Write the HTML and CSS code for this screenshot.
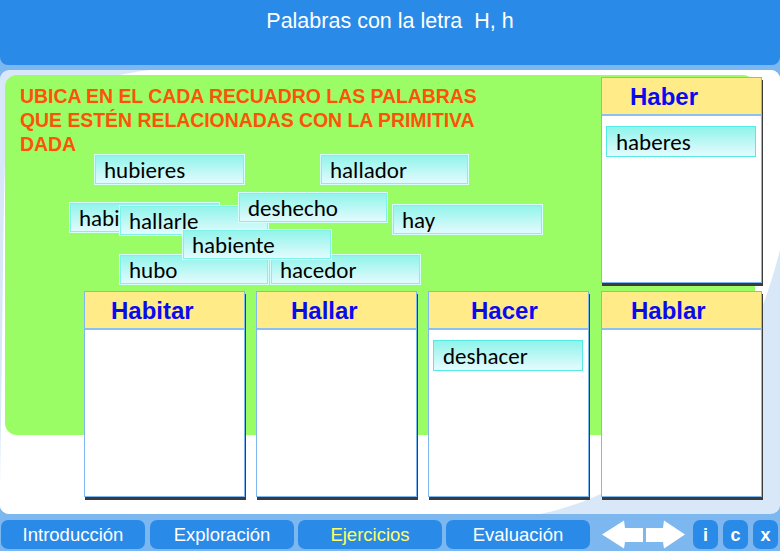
FILE: index.html
```html
<!DOCTYPE html>
<html lang="es">
<head>
<meta charset="utf-8">
<title>Palabras con la letra H, h</title>
<link rel="stylesheet" href="styles.css">
</head>
<body>
<div class="app">
  <header class="topbar">
    <h1 class="title">Palabras con la letra&nbsp; H, h</h1>
  </header>

  <main class="panel">
    <svg class="panel-bg" width="780" height="444" viewBox="0 0 780 444" aria-hidden="true">
      <path d="M150 0 L780 0 L780 180 C745 320 660 420 540 444 L0 444 L0 420 C2 300 3 160 5 90 C20 40 80 8 150 0 Z" fill="#ffffff"/>
    </svg>
    <div class="stage">
      <section class="field">
        <p class="instructions">UBICA EN EL CADA RECUADRO LAS PALABRAS<br>QUE ESTÉN RELACIONADAS CON LA PRIMITIVA<br>DADA</p>
        <div class="tile" style="left:89px;top:79px;width:151px">hubieres</div>
        <div class="tile" style="left:315px;top:79px;width:149px">hallador</div>
        <div class="tile" style="left:64px;top:127px;width:151px">habi</div>
        <div class="tile" style="left:114px;top:130px">hallarle</div>
        <div class="tile" style="left:233px;top:117px">deshecho</div>
        <div class="tile" style="left:387px;top:129px;width:151px">hay</div>
        <div class="tile" style="left:114px;top:179px">hubo</div>
        <div class="tile" style="left:265px;top:179px;width:151px">hacedor</div>
        <div class="tile" style="left:177px;top:154px">habiente</div>
      </section>

      <div class="box box-haber">
        <div class="box-head pad-29">Haber</div>
        <div class="box-body"><div class="tile tile-flow">haberes</div></div>
      </div>
      <div class="box box-habitar">
        <div class="box-head pad-27">Habitar</div>
        <div class="box-body"></div>
      </div>
      <div class="box box-hallar">
        <div class="box-head pad-35">Hallar</div>
        <div class="box-body"></div>
      </div>
      <div class="box box-hacer">
        <div class="box-head pad-43">Hacer</div>
        <div class="box-body"><div class="tile tile-flow">deshacer</div></div>
      </div>
      <div class="box box-hablar">
        <div class="box-head pad-30">Hablar</div>
        <div class="box-body"></div>
      </div>
    </div>
  </main>

  <nav class="navbar">
    <a class="nav-btn">Introducción</a>
    <a class="nav-btn">Exploración</a>
    <a class="nav-btn nav-active">Ejercicios</a>
    <a class="nav-btn">Evaluación</a>
    <div class="arrows">
      <svg width="41" height="29" viewBox="0 0 41 29" aria-hidden="true"><polygon points="0,14.5 22,0.5 23,8 41,8 41,22 23,22 22,28.5" fill="#ffffff"/></svg>
      <svg width="40" height="29" viewBox="0 0 40 29" aria-hidden="true"><polygon points="0,8 17,8 18,0.5 39,14.5 18,28.5 17,22 0,22" fill="#ffffff"/></svg>
    </div>
    <a class="mini-btn">i</a>
    <a class="mini-btn">c</a>
    <a class="mini-btn">x</a>
  </nav>
</div>
</body>
</html>
```

FILE: styles.css
```css
* { box-sizing: border-box; }
html, body { margin: 0; padding: 0; }
body {
  width: 780px;
  height: 551px;
  overflow: hidden;
  background: #7db7ef;
  font-family: "Liberation Sans", Arial, sans-serif;
}
.app { width: 780px; height: 551px; display: flex; flex-direction: column; }

.topbar {
  height: 65px;
  background: #2a8ae8;
  border-radius: 0 0 8px 8px;
  flex: none;
}
.title {
  margin: 0;
  padding-top: 8px;
  text-align: center;
  color: #ffffff;
  font-weight: normal;
  font-size: 21.5px;
  line-height: 26px;
}

.panel {
  position: relative;
  margin-top: 5px;
  height: 444px;
  flex: none;
  background: #d8e8f8;
  border-radius: 9px;
  overflow: hidden;
}
.panel-bg { position: absolute; left: 0; top: 0; }

.stage {
  position: relative;
  display: grid;
  grid-template-columns: 5px 79px 161px 11px 161px 11px 161px 12px 154px 7px 18px;
  grid-template-rows: 5px 2px 208px 6px 144px 64px;
}

.field {
  grid-column: 2 / 10;
  grid-row: 2 / 6;
  position: relative;
  z-index: 1;
  background: #9bfd66;
  border-radius: 12px;
}
.instructions {
  margin: 0;
  padding: 9px 0 0 15px;
  color: #ff5209;
  font-weight: bold;
  font-size: 19.4px;
  line-height: 24px;
}

.tile {
  position: absolute;
  width: 150px;
  height: 31px;
  padding-left: 9px;
  border: 1px solid #d6fffb;
  box-shadow: inset 0 0 0 1px #7ff2ea;
  background: linear-gradient(#8ff4ea, #e6fbfe);
  color: #000000;
  font-family: Carlito, Lato, "Open Sans", sans-serif;
  font-size: 23px;
  line-height: 31px;
  white-space: nowrap;
  overflow: hidden;
}
.tile-flow {
  position: static;
  border-color: #55ebe2;
  box-shadow: none;
}

.box {
  position: relative;
  z-index: 2;
  display: flex;
  flex-direction: column;
  background: #ffffff;
  border: 1px solid #7fb8f0;
  box-shadow: 1px 3px 0 #3c3c3c;
}
.box-haber { grid-column: 9 / 11; grid-row: 3; height: 206px; }
.box-habitar { grid-column: 3; grid-row: 5 / 7; height: 206px; }
.box-hallar { grid-column: 5; grid-row: 5 / 7; height: 206px; }
.box-hacer { grid-column: 7; grid-row: 5 / 7; height: 206px; }
.box-hablar { grid-column: 9 / 11; grid-row: 5 / 7; height: 206px; }

.box-head {
  height: 38px;
  flex: none;
  background: #ffec88;
  border-bottom: 2px solid #8cc0f2;
  color: #0a0af0;
  font-weight: bold;
  font-size: 24px;
  line-height: 37px;
}
.pad-27 { padding-left: 26px; }
.pad-29 { padding-left: 28px; }
.pad-30 { padding-left: 29px; }
.pad-35 { padding-left: 34px; }
.pad-43 { padding-left: 42px; }

.box-body { flex: 1; padding: 10px 0 0 4px; }

.navbar {
  flex: 1;
  display: flex;
  align-items: flex-start;
  padding: 6px 0 0 1px;
  gap: 4px;
}
.nav-btn {
  width: 144px;
  height: 29px;
  background: #2a8ae8;
  border-radius: 7px;
  color: #ffffff;
  text-align: center;
  font-size: 18.5px;
  line-height: 29px;
}
.nav-btn:nth-child(2) { margin-left: 1px; }
.nav-active { color: #ffff66; }

.arrows {
  display: flex;
  gap: 3px;
  margin-left: 8px;
  margin-right: 2px;
}
.mini-btn {
  width: 25px;
  height: 29px;
  margin-left: 1px;
  background: #2a8ae8;
  border-radius: 7px;
  color: #ffffff;
  text-align: center;
  font-weight: bold;
  font-size: 18px;
  line-height: 31px;
}
```
